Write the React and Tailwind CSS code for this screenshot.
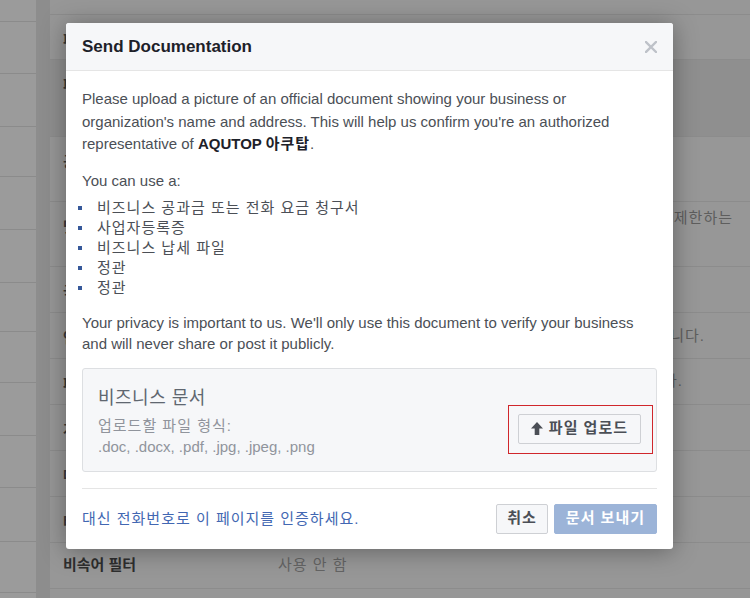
import React from "react";

const leftRows = [22, 52, 53, 50, 53, 53, 49, 51, 53, 52, 54, 51];

const UploadArrow = () => (
  <svg width="12" height="13" viewBox="0 0 12 13" className="mr-[6px]">
    <path d="M6 0 L12 6.5 L8.3 6.5 L8.3 13 L3.7 13 L3.7 6.5 L0 6.5 Z" fill="#4b4f56" />
  </svg>
);

const CloseIcon = () => (
  <svg width="12" height="12" viewBox="0 0 12 12">
    <path d="M1 1 L11 11 M11 1 L1 11" stroke="#bec2c9" strokeWidth="2.4" strokeLinecap="square" />
  </svg>
);

const Row = ({ h, dark, label, top = 14, children }) => (
  <div
    className={`flex shrink-0 border-b border-[#8c8c8c] ${dark ? "bg-[#8f8f8f]" : ""}`}
    style={{ height: h }}
  >
    <div className="w-[228px] shrink-0 pl-[13px] pt-[14px] text-[15px] font-bold text-[#3a3a3a] whitespace-nowrap">
      {label}
    </div>
    <div className="flex-1 text-[15px] tracking-[1px] text-[#5e5e5e]" style={{ paddingTop: top }}>
      {children}
    </div>
  </div>
);

export default function App() {
  return (
    <div className="relative w-[750px] h-[598px] overflow-hidden flex bg-[#979797] font-['Liberation_Sans','Noto_Sans_CJK_KR',sans-serif]">
      {/* page behind the dialog */}
      <div className="w-[36px] shrink-0 flex flex-col bg-[#9b9b9b]">
        {leftRows.map((h, i) => (
          <div key={i} className="shrink-0 border-b border-[#8b8b8b]" style={{ height: h }} />
        ))}
      </div>
      <div className="w-[14px] shrink-0 bg-[#8d8d8d]" />
      <div className="flex-1 flex flex-col">
        <Row h={15} label="" />
        <Row h={45} label="페이지 이름" />
        <Row h={77} dark label="페이지 주소" />
        <Row h={65} label="공개 범위" />
        <Row h={65} label="댓글 관리" top={5}>
          <div className="flex justify-end pr-[17px] whitespace-nowrap">
            게시물에 댓글을 남길 수 있는 사람을 제한하는
          </div>
          <div>단어를 설정합니다</div>
        </Row>
        <Row h={46} label="국가 제한" />
        <Row h={46} label="연령 제한" top={12}>
          <div className="flex justify-end pr-[45px] whitespace-nowrap">
            페이지를 볼 수 있는 연령을 제한합니다.
          </div>
        </Row>
        <Row h={46} label="페이지 관리" top={11}>
          <div className="flex justify-end pr-[67px] whitespace-nowrap">
            다른 페이지와 함께 관리합니다.
          </div>
        </Row>
        <Row h={46} label="게시 권한" />
        <Row h={46} label="메시지" />
        <Row h={46} label="태그 기능" />
        <div className="flex shrink-0 h-[46px] border-b border-[#8c8c8c] items-center">
          <div className="w-[228px] shrink-0 pl-[13px] text-[15px] font-bold text-[#2e2e2e]">비속어 필터</div>
          <div className="text-[15px] tracking-[1px] text-[#646464]">사용 안 함</div>
        </div>
      </div>

      {/* dialog */}
      <div className="absolute left-[66px] top-[23px] w-[607px] h-[526px] bg-white rounded-[3px] shadow-[0_2px_24px_rgba(0,0,0,0.35)] flex flex-col overflow-hidden">
        <div className="h-[48px] shrink-0 bg-[#f6f7f9] border-b border-[#e5e5e5] flex items-center justify-between px-[16px]">
          <span className="text-[17px] font-bold text-[#1d2129]">Send Documentation</span>
          <CloseIcon />
        </div>

        <div className="px-[16px] pt-[17px] text-[15px] text-[#4b4f56]">
          <p className="leading-[22.5px]">
            Please upload a picture of an official document showing your business or
            organization's name and address. This will help us confirm you're an authorized
            representative of <b className="text-[#1d2129]">AQUTOP <span className="tracking-[1px]">아쿠탑</span></b>.
          </p>
          <p className="mt-[14px] leading-[22px]">You can use a:</p>
          <ul className="mt-[6px] tracking-[1px]">
            {[
              "비즈니스 공과금 또는 전화 요금 청구서",
              "사업자등록증",
              "비즈니스 납세 파일",
              "정관",
              "정관",
            ].map((t, i) => (
              <li key={i} className="flex items-center leading-[20px]">
                <span className="w-[4px] h-[4px] bg-[#365899] ml-[-4px] mr-[15px] shrink-0" />
                {t}
              </li>
            ))}
          </ul>
          <p className="mt-[14px] leading-[21px]">
            Your privacy is important to us. We'll only use this document to verify your business
            and will never share or post it publicly.
          </p>

          <div className="mt-[14px] h-[104px] border border-[#dddfe2] bg-[#f6f7f9] rounded-[3px] pl-[15px] pr-[15px] pt-[17px] flex justify-between items-start">
            <div className="flex flex-col">
              <span className="text-[18px] leading-[24px] tracking-[0.5px] text-[#606770]">비즈니스 문서</span>
              <span className="mt-[5px] leading-[21.5px] tracking-[1px] text-[#90949c]">업로드할 파일 형식:</span>
              <span className="leading-[21.5px] text-[#90949c]">.doc, .docx, .pdf, .jpg, .jpeg, .png</span>
            </div>
            <div className="relative mt-[28px]">
              <button className="h-[30px] px-[12px] flex items-center bg-[#f6f7f9] border border-[#ced0d4] rounded-[2px] text-[15px] tracking-[1px] font-bold text-[#4b4f56]">
                <UploadArrow />
                파일 업로드
              </button>
              <span className="absolute -left-[10px] -right-[12px] -top-[9px] -bottom-[10px] border border-[#d0272c]" />
            </div>
          </div>

          <div className="mt-[16px] border-t border-[#e5e5e5]" />

          <div className="mt-[15px] flex items-center justify-between">
            <span className="text-[15px] tracking-[1px] text-[#4267b2] pt-[2px]">대신 전화번호로 이 페이지를 인증하세요.</span>
            <div className="flex gap-[6px]">
              <button className="h-[30px] px-[10px] bg-[#f6f7f9] border border-[#ced0d4] rounded-[2px] text-[15px] tracking-[1px] font-bold text-[#4b4f56]">
                취소
              </button>
              <button className="h-[30px] px-[11px] bg-[#9cb4d8] border border-[#9cb4d8] rounded-[2px] text-[15px] tracking-[1px] font-bold text-white">
                문서 보내기
              </button>
            </div>
          </div>
        </div>
      </div>
    </div>
  );
}
